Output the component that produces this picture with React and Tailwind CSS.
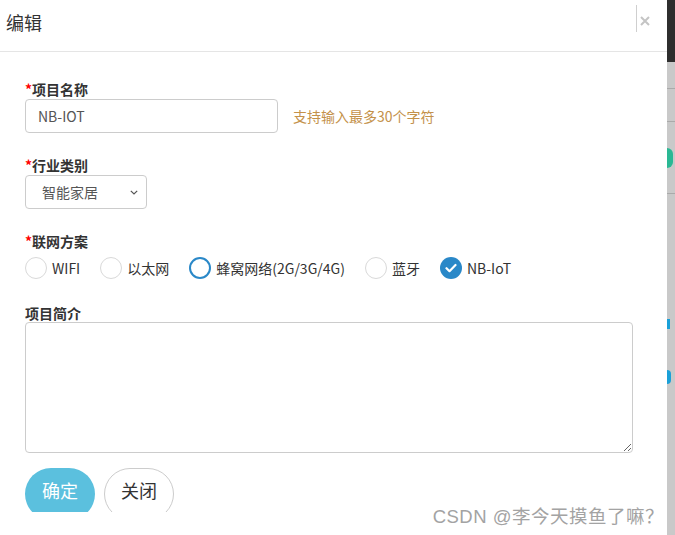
import { useState } from 'react';

const font = { fontFamily: '"Noto Sans CJK SC", "Noto Sans", sans-serif' };

const options = [
  { id: 'wifi', label: 'WIFI' },
  { id: 'eth', label: '以太网' },
  { id: 'cell', label: '蜂窝网络(2G/3G/4G)', focus: true },
  { id: 'bt', label: '蓝牙' },
  { id: 'nb', label: 'NB-IoT' },
];

function Radio({ opt, checked, onPick }) {
  let circle = 'border border-[#d9d9d9] bg-white';
  if (checked) circle = 'bg-[#2a88c8]';
  else if (opt.focus) circle = 'border-2 border-[#2a88c8] bg-white';
  return (
    <label className="flex items-center cursor-pointer mr-[20px]" onClick={() => onPick(opt.id)}>
      <span className={`w-[22px] h-[22px] rounded-full flex items-center justify-center ${circle}`}>
        {checked && (
          <svg width="12" height="10" viewBox="0 0 12 10" fill="none">
            <path d="M1.5 5.2l3 3L10.5 2" stroke="white" strokeWidth="2.2" strokeLinecap="round" strokeLinejoin="round" />
          </svg>
        )}
      </span>
      <span className="ml-[5px] text-[14px] text-[#333]">{opt.label}</span>
    </label>
  );
}

function Label({ children, required }) {
  return (
    <div className="text-[14px] font-bold text-[#333] leading-[16px] h-[16px]">
      {required && <span className="text-[#ff0000]">*</span>}
      {children}
    </div>
  );
}

export default function App() {
  const [net, setNet] = useState('nb');

  return (
    <div className="w-[675px] h-[535px] flex overflow-hidden bg-white" style={font}>
      {/* modal */}
      <div className="w-[667px] h-full flex flex-col bg-white relative shadow-[2px_0_4px_rgba(0,0,0,0.25)]">
        <div className="h-[52px] border-b border-[#e5e5e5] flex items-start justify-between">
          <div className="pl-[6px] pt-[10px] text-[18px] text-[#333] leading-[24px]">编辑</div>
          <div className="mt-[5px] mr-[17px] flex items-start">
            <span className="w-px h-[27px] bg-[#cfcfcf]" />
            <svg className="ml-[3px] mt-[11px]" width="10" height="10" viewBox="0 0 10 10">
              <path d="M1 1l8 8M9 1l-8 8" stroke="#c4c4c4" strokeWidth="2" />
            </svg>
          </div>
        </div>

        <div className="pl-[25px] pr-[34px] pt-[29px] flex flex-col">
          <Label required>项目名称</Label>
          <div className="mt-[2px] flex items-center">
            <div className="w-[253px] h-[34px] border border-[#ccc] rounded-[4px] flex items-center pl-[12px] text-[14px] text-[#555]">
              NB-IOT
            </div>
            <span className="ml-[15px] text-[14px] text-[#c4914a]">支持输入最多30个字符</span>
          </div>

          <div className="mt-[24px]">
            <Label required>行业类别</Label>
          </div>
          <div className="mt-[2px] w-[122px] h-[34px] border border-[#ccc] rounded-[4px] flex items-center justify-between pl-[16px] pr-[8px] text-[14px] text-[#555]">
            <span>智能家居</span>
            <svg width="8" height="5" viewBox="0 0 8 5" fill="none">
              <path d="M0.8 0.8l3.2 3.2 3.2-3.2" stroke="#555" strokeWidth="1.2" />
            </svg>
          </div>

          <div className="mt-[24px]">
            <Label required>联网方案</Label>
          </div>
          <div className="mt-[7px] flex items-center h-[24px]">
            {options.map((o) => (
              <Radio key={o.id} opt={o} checked={net === o.id} onPick={setNet} />
            ))}
          </div>

          <div className="mt-[25px]">
            <Label>项目简介</Label>
          </div>
          <textarea className="mt-[1px] w-[608px] h-[131px] border border-[#ccc] rounded-[4px] outline-none resize" />

          <div className="mt-[15px] h-[44px] overflow-hidden flex items-start gap-[9px]">
            <button className="w-[70px] h-[52px] rounded-full bg-[#5bc0de] text-white text-[18px] pb-[8px]">确定</button>
            <button className="w-[70px] h-[52px] rounded-full bg-white border border-[#ccc] text-[#333] text-[18px] pb-[8px]">关闭</button>
          </div>
        </div>

        <div className="absolute right-[3px] bottom-[4px] text-[18.5px] text-[#a3a3a3] tracking-[0.5px]" style={{ fontFamily: '"Liberation Sans", "Noto Sans CJK SC", sans-serif' }}>
          CSDN @李今天摸鱼了嘛？
        </div>
      </div>

      {/* page behind the modal */}
      <div className="flex-1 h-full flex flex-col bg-[#c9c9c9] relative">
        <div className="h-[62px] bg-[#2e2e2e]" />
        <div className="h-[27px] border-b border-[#aaa]" />
        <div className="h-[33px] border-b border-[#aaa]" />
        <div className="h-[72px] border-b border-[#aaa] flex items-center">
          <span className="w-[6px] h-[20px] rounded-r-full bg-[#2ab894]" />
        </div>
        <div className="h-[120px]" />
        <div className="h-[20px] flex items-center"><span className="w-[3px] h-[10px] bg-[#1aa0d8]" /></div>
        <div className="h-[32px]" />
        <div className="h-[22px] flex items-center"><span className="w-[4px] h-[14px] bg-[#1aa0d8] rounded-r" /></div>
      </div>
    </div>
  );
}
